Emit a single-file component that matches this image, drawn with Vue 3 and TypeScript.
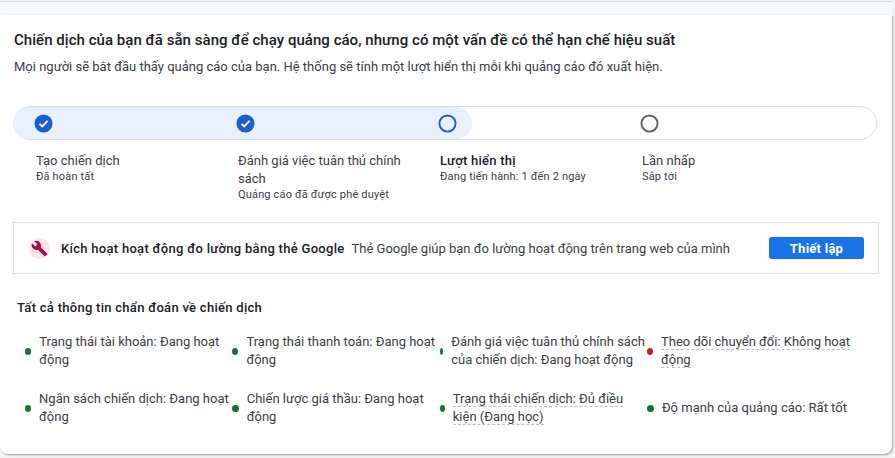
<template>
  <div class="page">
    <div class="top-strip"></div>
    <section class="card">
      <h1 class="title">{{ title }}</h1>
      <p class="subtitle">{{ subtitle }}</p>

      <div class="track">
        <div class="track-fill"></div>
        <div class="track-icons">
          <div v-for="s in steps" :key="s.name" class="track-cell">
            <svg v-if="s.state === 'done'" class="step-icon" viewBox="0 0 20 20">
              <circle cx="10" cy="10" r="9.5" fill="#1a5fd0" />
              <path d="M5.8 10.3l2.9 2.8 5.6-5.8" fill="none" stroke="#fff" stroke-width="1.8" />
            </svg>
            <svg v-else class="step-icon" viewBox="0 0 20 20">
              <circle
                cx="10"
                cy="10"
                r="8.5"
                fill="none"
                :stroke="s.state === 'active' ? '#1a5fd0' : '#5f6368'"
                stroke-width="2"
              />
            </svg>
          </div>
        </div>
      </div>

      <div class="steps">
        <div v-for="s in steps" :key="s.name" class="step">
          <div class="step-name" :class="{ 'step-name-active': s.state === 'active' }">{{ s.name }}</div>
          <div class="step-sub">{{ s.sub }}</div>
        </div>
      </div>

      <div class="banner">
        <span class="wrench">
          <svg viewBox="0 0 24 24" width="17" height="17">
            <path
              fill="#a50e4f"
              d="M22.7 19l-9.1-9.1c.9-2.3.4-5-1.5-6.9-2-2-5-2.4-7.4-1.3L9 6 6 9 1.600 4.700C.4 7.100.9 10.100 2.900 12.100c1.900 1.900 4.600 2.400 6.900 1.500l9.100 9.100c.4.400 1 .4 1.400 0l2.300-2.300c.5-.4.5-1.100.1-1.400z"
            />
          </svg>
        </span>
        <strong class="banner-title">Kích hoạt hoạt động đo lường bằng thẻ Google</strong>
        <span class="banner-text">Thẻ Google giúp bạn đo lường hoạt động trên trang web của mình</span>
        <button class="setup" type="button">Thiết lập</button>
      </div>

      <h2 class="diag-title">Tất cả thông tin chẩn đoán về chiến dịch</h2>
      <div class="diag-grid">
        <div v-for="d in diagnostics" :key="d.text" class="diag">
          <span class="dot" :class="{ 'dot-red': d.bad }"></span>
          <span class="diag-text"><span :class="{ dashed: d.dashed }">{{ d.text }}</span></span>
        </div>
      </div>
    </section>
  </div>
</template>

<script setup lang="ts">
interface Step {
  name: string
  sub: string
  state: 'done' | 'active' | 'todo'
}

interface Diagnostic {
  text: string
  bad?: boolean
  dashed?: boolean
}

const title = 'Chiến dịch của bạn đã sẵn sàng để chạy quảng cáo, nhưng có một vấn đề có thể hạn chế hiệu suất'
const subtitle = 'Mọi người sẽ bắt đầu thấy quảng cáo của bạn. Hệ thống sẽ tính một lượt hiển thị mỗi khi quảng cáo đó xuất hiện.'

const steps: Step[] = [
  { name: 'Tạo chiến dịch', sub: 'Đã hoàn tất', state: 'done' },
  { name: 'Đánh giá việc tuân thủ chính sách', sub: 'Quảng cáo đã được phê duyệt', state: 'done' },
  { name: 'Lượt hiển thị', sub: 'Đang tiến hành: 1 đến 2 ngày', state: 'active' },
  { name: 'Lần nhấp', sub: 'Sắp tới', state: 'todo' }
]

const diagnostics: Diagnostic[] = [
  { text: 'Trạng thái tài khoản: Đang hoạt động' },
  { text: 'Trạng thái thanh toán: Đang hoạt động' },
  { text: 'Đánh giá việc tuân thủ chính sách của chiến dịch: Đang hoạt động' },
  { text: 'Theo dõi chuyển đổi: Không hoạt động', bad: true, dashed: true },
  { text: 'Ngân sách chiến dịch: Đang hoạt động' },
  { text: 'Chiến lược giá thầu: Đang hoạt động' },
  { text: 'Trạng thái chiến dịch: Đủ điều kiện (Đang học)', dashed: true },
  { text: 'Độ mạnh của quảng cáo: Rất tốt' }
]
</script>

<style>
html,
body {
  margin: 0;
  background: #f1f3f4;
}
</style>

<style scoped>
.page {
  width: 895px;
  height: 458px;
  overflow: hidden;
  box-sizing: border-box;
  padding-top: 1px;
  font-family: Roboto, "Noto Sans", sans-serif;
  color: #3c4043;
}

.top-strip {
  width: 892px;
  height: 14px;
  box-sizing: border-box;
  background: #f8f9fa;
  border-top: 1px solid #dadce0;
}

.card {
  width: 892px;
  height: 439px;
  box-sizing: border-box;
  padding: 15px 0 0 13px;
  background: #fff;
  border-radius: 0 0 8px 8px;
  box-shadow: 1px 1px 2px rgba(60, 64, 67, 0.45);
}

.title {
  margin: 0 0 0 1px;
  font-size: 15px;
  line-height: 20px;
  font-weight: 500;
  letter-spacing: 0.04px;
  color: #202124;
}

.subtitle {
  margin: 8px 0 0 1px;
  font-size: 13px;
  line-height: 18px;
  color: #3c4043;
}

.track {
  position: relative;
  width: 864px;
  height: 34px;
  margin-top: 30px;
  box-sizing: border-box;
  border: 1px solid #dadce0;
  border-radius: 17px;
}

.track-fill {
  position: absolute;
  left: -1px;
  top: 0;
  width: 459px;
  height: 32px;
  background: #e8f0fe;
  border-radius: 16px;
}

.track-icons {
  position: relative;
  display: flex;
  height: 32px;
  padding-left: 20px;
}

.track-cell {
  display: flex;
  align-items: center;
  width: 202px;
}

.step-icon {
  width: 19px;
  height: 19px;
}

.steps {
  display: flex;
  margin-top: 12px;
  padding-left: 23px;
  height: 70px;
}

.step {
  width: 202px;
  box-sizing: border-box;
  padding-right: 30px;
}

.step-name {
  font-size: 13px;
  line-height: 18px;
  color: #3c4043;
}

.step-name-active {
  font-weight: 500;
  letter-spacing: 0.25px;
  color: #202124;
}

.step-sub {
  font-size: 11px;
  line-height: 14px;
  letter-spacing: 0.17px;
  color: #3c4043;
}

.banner {
  display: flex;
  align-items: center;
  width: 866px;
  height: 52px;
  box-sizing: border-box;
  padding: 0 14px 0 15px;
  border: 1px solid #dadce0;
}

.wrench {
  display: flex;
  align-items: center;
  justify-content: center;
  flex: none;
  width: 21px;
  height: 21px;
  border-radius: 50%;
  background: #fce4ec;
}

.banner-title {
  margin-left: 11px;
  font-size: 13px;
  font-weight: 500;
  letter-spacing: 0.29px;
  color: #202124;
}

.banner-text {
  margin-left: 7px;
  font-size: 13px;
  color: #3c4043;
}

.setup {
  margin-left: auto;
  width: 95px;
  height: 22px;
  padding: 0;
  border: 0;
  border-radius: 3px;
  background: #1a73e8;
  color: #fff;
  font-family: inherit;
  font-size: 13px;
  font-weight: 700;
  letter-spacing: 0.25px;
}

.diag-title {
  margin: 25px 0 0 4px;
  font-size: 13px;
  line-height: 18px;
  font-weight: 500;
  letter-spacing: 0.28px;
  color: #202124;
}

.diag-grid {
  display: grid;
  grid-template-columns: repeat(4, 207.3px);
  grid-auto-rows: 57px;
  margin: 16px 0 0 12px;
}

.diag {
  display: flex;
  align-items: center;
  height: 36px;
}

.dot {
  width: 7px;
  height: 7px;
  border-radius: 50%;
  background: #137333;
  margin-right: 8px;
}

.dot-red {
  background: #c5221f;
}

.diag-text {
  font-size: 13px;
  line-height: 18px;
}

.dashed {
  border-bottom: 1px dashed #bdc1c6;
}
</style>
